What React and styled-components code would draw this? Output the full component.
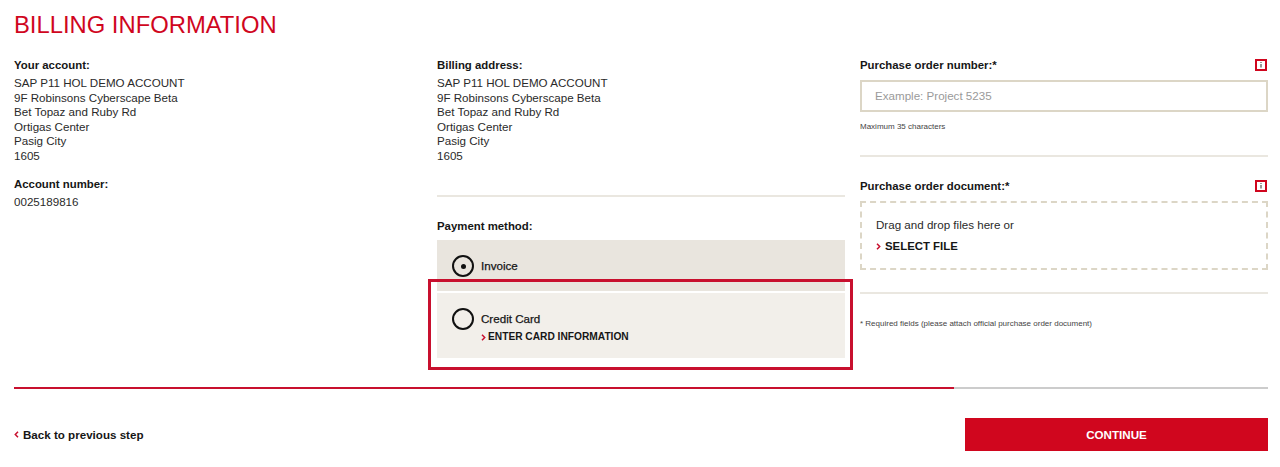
import React from "react";
import styled, { createGlobalStyle } from "styled-components";

const Global = createGlobalStyle`
  html, body { margin: 0; padding: 0; background: #fff; }
  body { font-family: "Liberation Sans", Arial, sans-serif; color: #1c1c1c; font-size: 11.6px; }
`;
const Page = styled.div`
  position: relative;
  width: 1280px;
  height: 467px;
  box-sizing: border-box;
  padding: 11px 12px 0 14px;
  overflow: hidden;
`;
const Title = styled.h1`
  margin: 0 0 19px;
  font-size: 23.8px;
  line-height: 28px;
  font-weight: 400;
  color: #d0061e;
`;
const Columns = styled.div`
  display: grid;
  grid-template-columns: 408px 408px 408px;
  column-gap: 15px;
  height: 329px;
`;
const Column = styled.div`
  display: flex;
  flex-direction: column;
  align-items: stretch;
`;
const Label = styled.div`
  font-weight: 700;
  font-size: 11.4px;
  line-height: 14px;
  color: #161616;
  margin-top: ${(p) => p.$top || 0}px;
`;
const Address = styled.div`
  margin-top: 4px;
  line-height: 14.5px;
  color: #2a2a2a;
`;
const Rule = styled.div`
  height: 2px;
  background: #eae7e0;
  margin-top: ${(p) => p.$top}px;
`;
const LabelRow = styled.div`
  display: flex;
  justify-content: space-between;
  align-items: center;
  margin-top: ${(p) => p.$top || 0}px;
  height: 14px;
`;
const InfoBox = styled.span`
  box-sizing: border-box;
  width: 12px;
  height: 12px;
  margin-right: 1px;
  border: 2px solid #d0061e;
  display: flex;
  align-items: center;
  justify-content: center;
`;
const PaymentOption = styled.div`
  box-sizing: border-box;
  height: ${(p) => p.$height}px;
  margin-top: ${(p) => p.$top}px;
  background: ${(p) => p.$bg};
  padding: ${(p) => p.$pad}px 0 0 15px;
  display: flex;
  gap: 7px;
  align-items: flex-start;
`;
const Radio = styled.span`
  box-sizing: border-box;
  flex: none;
  width: 22px;
  height: 22px;
  border: 2px solid #111;
  border-radius: 50%;
  display: flex;
  align-items: center;
  justify-content: center;
`;
const RadioDot = styled.span`
  width: 5px;
  height: 5px;
  border-radius: 50%;
  background: #111;
`;
const OptionText = styled.div`
  display: flex;
  flex-direction: column;
  gap: 4px;
  padding-top: ${(p) => p.$pad}px;
`;
const OptionName = styled.div`
  font-size: 11.6px;
  line-height: 14px;
  font-weight: 400;
  -webkit-text-stroke: 0.25px #161616;
  color: #161616;
`;
const Action = styled.div`
  display: flex;
  align-items: center;
  gap: ${(p) => p.$gap}px;
  font-weight: 700;
  font-size: ${(p) => p.$size}px;
  line-height: 14px;
  color: #161616;
`;
const Input = styled.input`
  box-sizing: border-box;
  display: block;
  width: 100%;
  height: 32px;
  margin-top: 8px;
  padding: 0 13px 2px;
  border: 2px solid #dcd6c6;
  outline: none;
  border-radius: 0;
  background: #fff;
  font: 11.6px "Liberation Sans", Arial, sans-serif;
  &::placeholder { color: #9a9a9a; opacity: 1; }
`;
const Hint = styled.div`
  font-size: 8px;
  line-height: 10px;
  color: #444;
  margin-top: ${(p) => p.$top}px;
`;
const DropZone = styled.div`
  box-sizing: border-box;
  height: 69px;
  margin-top: 8px;
  border: 2px dashed #dcd6c6;
  padding: 15px 14px 0;
  display: flex;
  flex-direction: column;
  gap: 7px;
  color: #2a2a2a;
  line-height: 14px;
`;
const Footer = styled.div`
  display: flex;
  flex-direction: column;
`;
const Track = styled.div`
  height: 2px;
  background: #cccccc;
`;
const Fill = styled.div`
  height: 100%;
  background: #c8102e;
`;
const FooterRow = styled.div`
  display: flex;
  justify-content: space-between;
  align-items: center;
  margin-top: 29px;
`;
const Continue = styled.button`
  width: 303px;
  height: 33px;
  border: 0;
  padding: 0;
  background: #d0061e;
  color: #fff;
  font: 700 11.6px "Liberation Sans", Arial, sans-serif;
`;
const Highlight = styled.div`
  position: absolute;
  left: 428px;
  top: 279px;
  width: 425px;
  height: 91px;
  box-sizing: border-box;
  border: 3px solid #c8102e;
  pointer-events: none;
`;

const Chevron = ({ left, size = 6 }) => (
  <svg width={size - 1} height={size + 1} viewBox="0 0 5 7" fill="none" aria-hidden="true">
    <path d={left ? "M4 .8 1.3 3.5 4 6.2" : "M1 .8 3.7 3.5 1 6.2"} stroke="#c8102e" strokeWidth="1.5" />
  </svg>
);
const Info = () => (
  <InfoBox>
    <svg width="2" height="6" viewBox="0 0 2 6" aria-hidden="true">
      <rect x="0.5" y="0" width="1" height="1" fill="#333" />
      <rect x="0.5" y="2" width="1" height="3.5" fill="#333" />
    </svg>
  </InfoBox>
);

const addressLines = [
  "SAP P11 HOL DEMO ACCOUNT",
  "9F Robinsons Cyberscape Beta",
  "Bet Topaz and Ruby Rd",
  "Ortigas Center",
  "Pasig City",
  "1605",
];
const AddressBlock = () => (
  <Address>
    {addressLines.map((l) => (
      <div key={l}>{l}</div>
    ))}
  </Address>
);

export default function App() {
  return (
    <Page>
      <Global />
      <Title>BILLING INFORMATION</Title>
      <Columns>
        <Column>
          <Label>Your account:</Label>
          <AddressBlock />
          <Label $top={14}>Account number:</Label>
          <Address>0025189816</Address>
        </Column>
        <Column>
          <Label>Billing address:</Label>
          <AddressBlock />
          <Rule $top={32} />
          <Label $top={22}>Payment method:</Label>
          <PaymentOption $height={51} $top={7} $bg="#e9e5de" $pad={15}>
            <Radio><RadioDot /></Radio>
            <OptionText $pad={4}><OptionName>Invoice</OptionName></OptionText>
          </PaymentOption>
          <PaymentOption $height={65} $top={2} $bg="#f2efea" $pad={15}>
            <Radio />
            <OptionText $pad={4}>
              <OptionName>Credit Card</OptionName>
              <Action $gap={2} $size={10.2}><Chevron />ENTER CARD INFORMATION</Action>
            </OptionText>
          </PaymentOption>
        </Column>
        <Column>
          <LabelRow>
            <Label>Purchase order number:*</Label>
            <Info />
          </LabelRow>
          <Input placeholder="Example: Project 5235" readOnly />
          <Hint $top={10}>Maximum 35 characters</Hint>
          <Rule $top={23} />
          <LabelRow $top={22}>
            <Label>Purchase order document:*</Label>
            <Info />
          </LabelRow>
          <DropZone>
            <div>Drag and drop files here or</div>
            <Action $gap={4} $size={11.4}><Chevron />SELECT FILE</Action>
          </DropZone>
          <Rule $top={22} />
          <Hint $top={25}>* Required fields (please attach official purchase order document)</Hint>
        </Column>
      </Columns>
      <Footer>
        <Track><Fill style={{ width: `${(940 / 1254) * 100}%` }} /></Track>
        <FooterRow>
          <Action $gap={4} $size={11.6}><Chevron left />Back to previous step</Action>
          <Continue>CONTINUE</Continue>
        </FooterRow>
      </Footer>
      <Highlight />
    </Page>
  );
}
